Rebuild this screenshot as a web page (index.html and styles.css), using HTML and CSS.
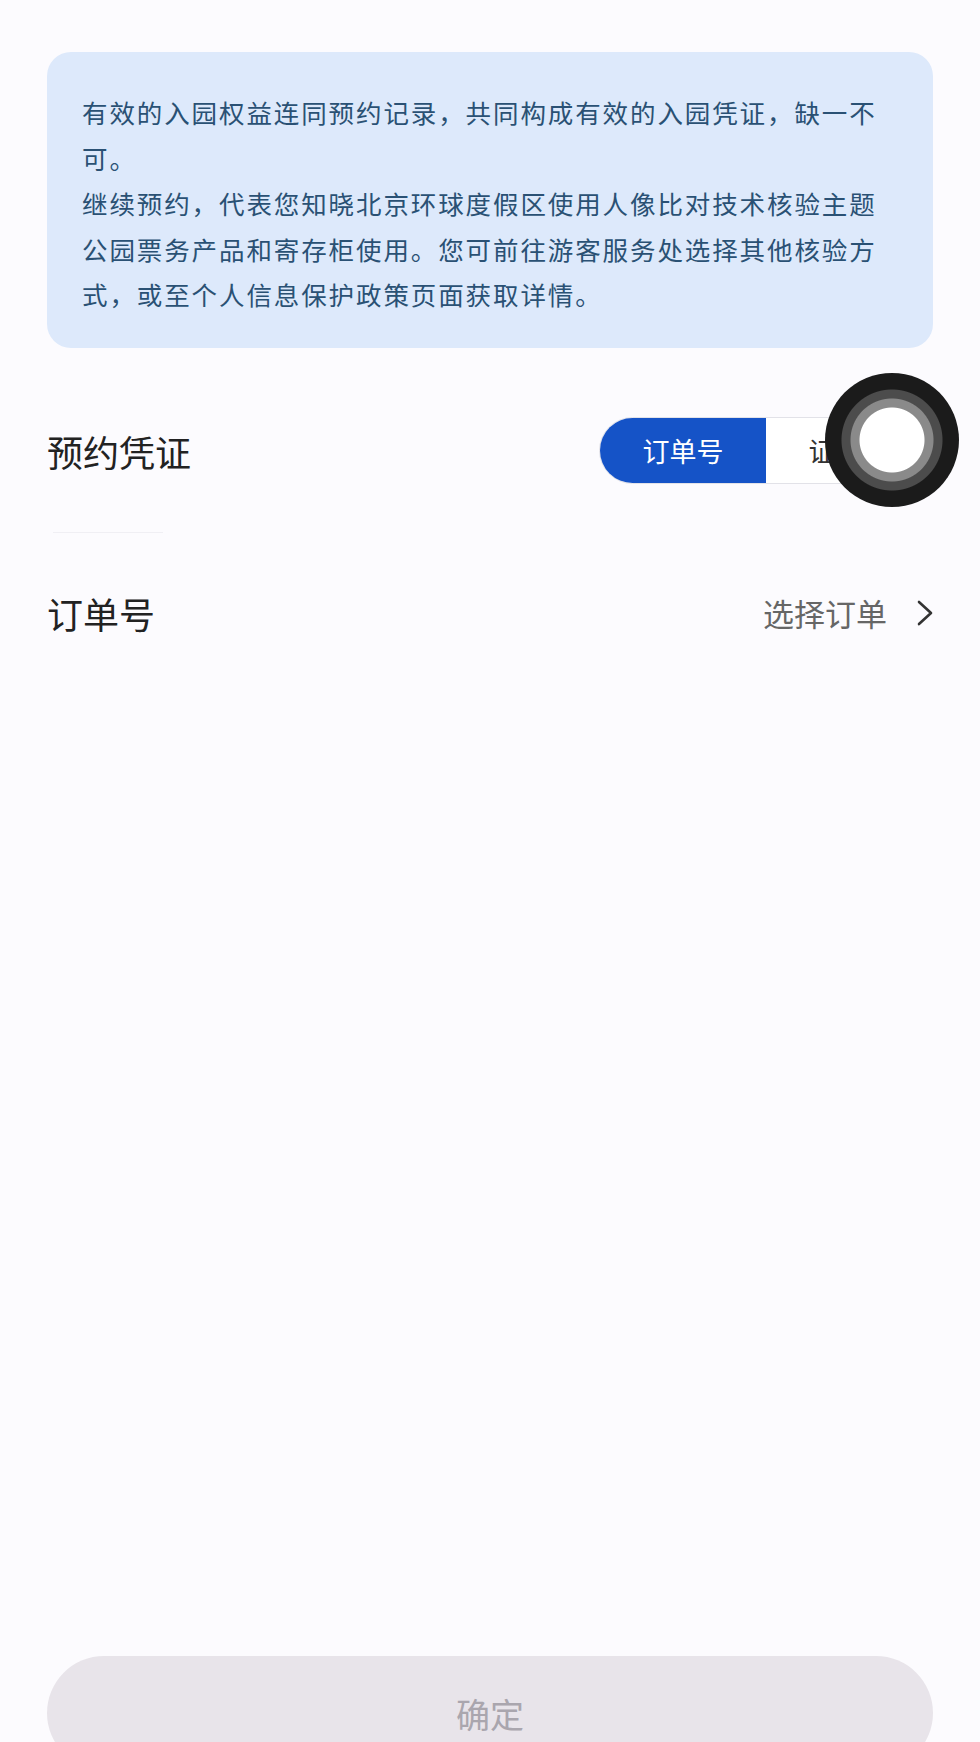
FILE: index.html
```html
<!DOCTYPE html>
<html lang="zh-CN">
<head>
    <meta charset="UTF-8">
    <meta name="viewport" content="width=device-width, initial-scale=1.0">
    <title>预约凭证</title>
    <link rel="stylesheet" href="styles.css">
</head>
<body>
    <div class="page">
        <div class="notice">
            <p>有效的入园权益连同预约记录，共同构成有效的入园凭证，缺一不可。</p>
            <p>继续预约，代表您知晓北京环球度假区使用人像比对技术核验主题公园票务产品和寄存柜使用。您可前往游客服务处选择其他核验方式，或至个人信息保护政策页面获取详情。</p>
        </div>

        <div class="field-row voucher-row">
            <span class="field-label">预约凭证</span>
            <div class="segmented">
                <button class="segment active">订单号</button>
                <button class="segment">证件号</button>
            </div>
        </div>
        <div class="divider"></div>

        <div class="field-row order-row">
            <span class="field-label">订单号</span>
            <a class="picker" href="#">
                <span>选择订单</span>
                <svg class="chevron" width="16" height="26" viewBox="0 0 16 26">
                    <polyline points="2,2 14,13 2,24" fill="none" stroke="#333" stroke-width="2.6" stroke-linecap="round" stroke-linejoin="round"/>
                </svg>
            </a>
        </div>

        <button class="confirm" disabled>确定</button>

        <!-- floating assistive touch button -->
        <div class="float-ball"></div>
    </div>
</body>
</html>
```

FILE: styles.css
```css
body {
    margin: 0;
    background: #fcfbfe;
    font-family: "Noto Sans CJK SC", "Noto Sans", sans-serif;
}
.page {
    position: relative;
    height: 1742px;
    overflow: hidden;
    box-sizing: border-box;
    padding: 52px 47px 0;
    display: flex;
    flex-direction: column;
}
.notice {
    background: #dde9fb;
    border-radius: 24px;
    padding: 37px 35px 31px;
    color: #2a5174;
    font-size: 25.5px;
    line-height: 45.5px;
    letter-spacing: 1.9px;
}
.notice p {
    margin: 0;
}
.field-row {
    display: flex;
    align-items: center;
    justify-content: space-between;
}
.voucher-row {
    margin-top: 22px;
    height: 162px;
}
.order-row {
    height: 160px;
}
.field-label {
    font-size: 36px;
    color: #222;
}
.divider {
    width: 110px;
    margin-left: 6px;
    height: 1px;
    background: #f0eff4;
}
.segmented {
    display: flex;
    width: 334px;
    height: 67px;
    box-sizing: border-box;
    border: 1.5px solid #e2e2e8;
    border-radius: 34px;
    overflow: hidden;
    background: #fff;
}
.segment {
    flex: 1;
    border: none;
    background: transparent;
    font-family: inherit;
    font-size: 27px;
    color: #333;
    padding: 0;
}
.segment.active {
    background: #1553c7;
    color: #fff;
}
.picker {
    display: flex;
    align-items: center;
    gap: 30px;
    text-decoration: none;
    font-size: 31px;
    color: #666;
}
.confirm {
    margin-top: auto;
    margin-bottom: -28px;
    height: 114px;
    flex-shrink: 0;
    border: none;
    border-radius: 57px;
    background: #e8e4ea;
    color: #aaa6ae;
    font-family: inherit;
    font-size: 34px;
}
.float-ball {
    position: absolute;
    left: 825px;
    top: 373px;
    width: 134px;
    height: 134px;
    border-radius: 50%;
    background: radial-gradient(circle, #fff 0 32px, #8a8a8a 33px 41px, #4c4c4c 42px 50px, #1b1b1b 51px);
}
```
